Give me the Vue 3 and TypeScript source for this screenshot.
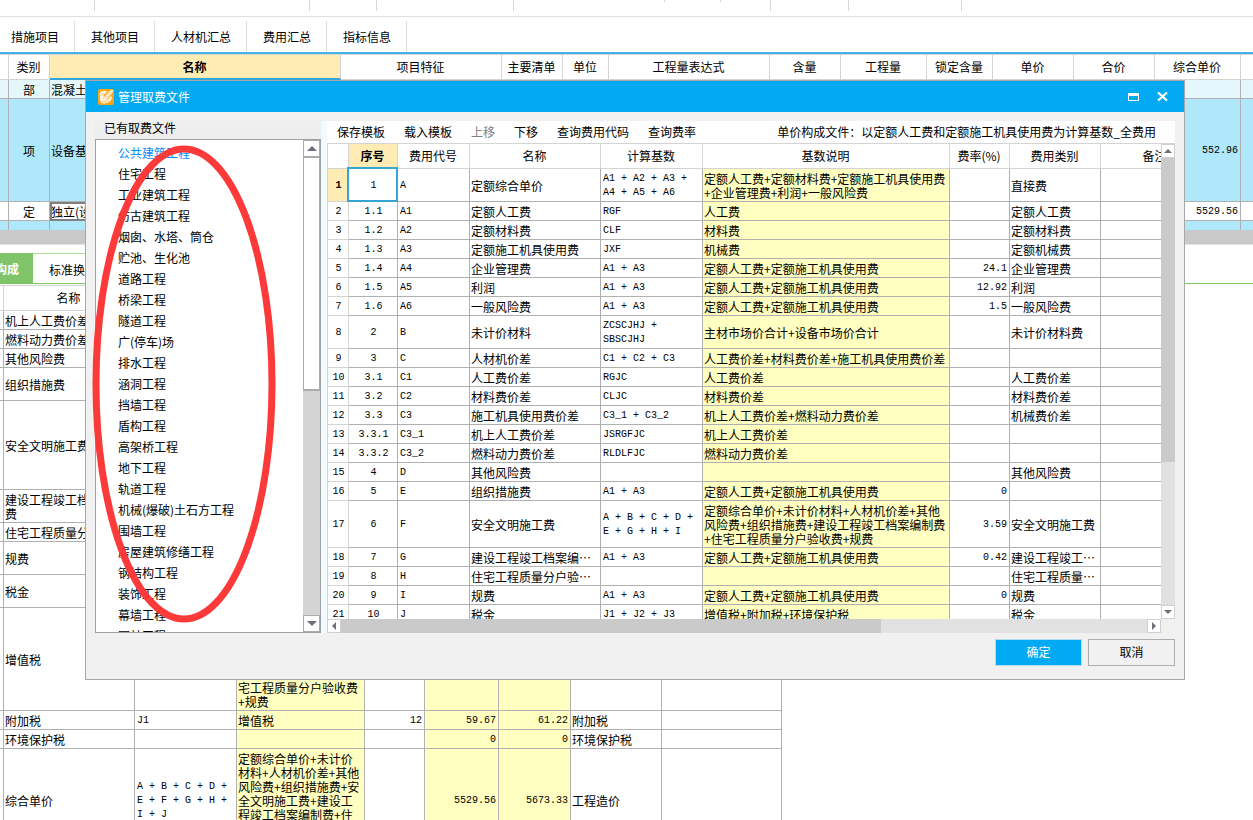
<script setup lang="ts">
import { ref } from 'vue'

interface FeeRow {
  no: string
  code: string
  name: string
  base: string
  desc: string
  rate: string
  kind: string
  lines: number
}

interface CostRow {
  name: string
  base: string
  desc: string
  rate: string
  price: string
  total: string
  kind: string
  lines: number
}

const navTabs = ['措施项目', '其他项目', '人材机汇总', '费用汇总', '指标信息']

const mainColumns = ['', '类别', '名称', '项目特征', '主要清单', '单位', '工程量表达式', '含量', '工程量', '锁定含量', '单价', '合价', '综合单价', '']

const templates = [
  '公共建筑工程', '住宅工程', '工业建筑工程', '仿古建筑工程', '烟囱、水塔、筒仓', '贮池、生化池',
  '道路工程', '桥梁工程', '隧道工程', '广(停车)场', '排水工程', '涵洞工程', '挡墙工程', '盾构工程',
  '高架桥工程', '地下工程', '轨道工程', '机械(爆破)土石方工程', '围墙工程', '房屋建筑修缮工程',
  '钢结构工程', '装饰工程', '幕墙工程', '园林工程',
]
const selected = ref(0)

const tools = [
  { label: '保存模板', disabled: false },
  { label: '载入模板', disabled: false },
  { label: '上移', disabled: true },
  { label: '下移', disabled: false },
  { label: '查询费用代码', disabled: false },
  { label: '查询费率', disabled: false },
]

const LABOR = '定额人工费+定额施工机具使用费'

function fee(no: string, code: string, name: string, base: string, desc: string, rate: string, kind: string, lines = 1): FeeRow {
  return { no, code, name, base, desc, rate, kind, lines }
}

const feeRows: FeeRow[] = [
  fee('1', 'A', '定额综合单价', 'A1 + A2 + A3 +\nA4 + A5 + A6', '定额人工费+定额材料费+定额施工机具使用费\n+企业管理费+利润+一般风险费', '', '直接费', 2),
  fee('1.1', 'A1', '定额人工费', 'RGF', '人工费', '', '定额人工费'),
  fee('1.2', 'A2', '定额材料费', 'CLF', '材料费', '', '定额材料费'),
  fee('1.3', 'A3', '定额施工机具使用费', 'JXF', '机械费', '', '定额机械费'),
  fee('1.4', 'A4', '企业管理费', 'A1 + A3', LABOR, '24.1', '企业管理费'),
  fee('1.5', 'A5', '利润', 'A1 + A3', LABOR, '12.92', '利润'),
  fee('1.6', 'A6', '一般风险费', 'A1 + A3', LABOR, '1.5', '一般风险费'),
  fee('2', 'B', '未计价材料', 'ZCSCJHJ +\nSBSCJHJ', '主材市场价合计+设备市场价合计', '', '未计价材料费', 2),
  fee('3', 'C', '人材机价差', 'C1 + C2 + C3', '人工费价差+材料费价差+施工机具使用费价差', '', ''),
  fee('3.1', 'C1', '人工费价差', 'RGJC', '人工费价差', '', '人工费价差'),
  fee('3.2', 'C2', '材料费价差', 'CLJC', '材料费价差', '', '材料费价差'),
  fee('3.3', 'C3', '施工机具使用费价差', 'C3_1 + C3_2', '机上人工费价差+燃料动力费价差', '', '机械费价差'),
  fee('3.3.1', 'C3_1', '机上人工费价差', 'JSRGFJC', '机上人工费价差', '', ''),
  fee('3.3.2', 'C3_2', '燃料动力费价差', 'RLDLFJC', '燃料动力费价差', '', ''),
  fee('4', 'D', '其他风险费', '', '', '', '其他风险费'),
  fee('5', 'E', '组织措施费', 'A1 + A3', LABOR, '0', ''),
  fee('6', 'F', '安全文明施工费', 'A + B + C + D +\nE + G + H + I', '定额综合单价+未计价材料+人材机价差+其他\n风险费+组织措施费+建设工程竣工档案编制费\n+住宅工程质量分户验收费+规费', '3.59', '安全文明施工费', 3),
  fee('7', 'G', '建设工程竣工档案编…', 'A1 + A3', LABOR, '0.42', '建设工程竣工…'),
  fee('8', 'H', '住宅工程质量分户验…', '', '', '', '住宅工程质量…'),
  fee('9', 'I', '规费', 'A1 + A3', LABOR, '0', '规费'),
  fee('10', 'J', '税金', 'J1 + J2 + J3', '增值税+附加税+环境保护税', '', '税金'),
]

const SUM_DESC = '定额综合单价+未计价\n材料+人材机价差+其他\n风险费+组织措施费+安\n全文明施工费+建设工\n程竣工档案编制费+住\n宅工程质量分户验收费\n+规费'

function cost(name: string, lines: number, extra: Partial<CostRow> = {}): CostRow {
  return { name, base: '', desc: '', rate: '', price: '', total: '', kind: '', lines, ...extra }
}

const costRows: CostRow[] = [
  cost('机上人工费价差', 1),
  cost('燃料动力费价差', 1),
  cost('其他风险费', 1),
  cost('组织措施费', 2),
  cost('安全文明施工费', 6),
  cost('建设工程竣工档案编制\n费', 2),
  cost('住宅工程质量分户验收费', 1),
  cost('规费', 2),
  cost('税金', 2),
  cost('增值税', 7, { desc: SUM_DESC }),
  cost('附加税', 1, { base: 'J1', desc: '增值税', rate: '12', price: '59.67', total: '61.22', kind: '附加税' }),
  cost('环境保护税', 1, { price: '0', total: '0', kind: '环境保护税' }),
  cost('综合单价', 7, { base: 'A + B + C + D +\nE + F + G + H +\nI + J', desc: SUM_DESC + '+税金', price: '5529.56', total: '5673.33', kind: '工程造价' }),
]
</script>

<template>
  <div class="app">
    <div class="ribbon">
      <i class="w95"></i><i class="w215"></i><i class="w67"></i><i class="w137"></i><i class="w151 short"></i><i class="w56 short"></i><i class="w50"></i><i class="w78"></i><i class="w113"></i>
    </div>

    <nav class="nav">
      <button v-for="t in navTabs" :key="t" type="button" class="nav-tab">{{ t }}</button>
    </nav>

    <table class="grid main-grid">
      <colgroup>
        <col class="w9" /><col class="w41" /><col class="w291" /><col class="w161" /><col class="w61" /><col class="w46" />
        <col class="w161" /><col class="w71" /><col class="w86" /><col class="w66" /><col class="w81" /><col class="w81" /><col class="w86" /><col />
      </colgroup>
      <thead>
        <tr>
          <th v-for="(c, i) in mainColumns" :key="i" :class="{ current: c === '名称' }">{{ c }}</th>
        </tr>
      </thead>
      <tbody>
        <tr class="part">
          <td></td><td class="c">部</td><td>混凝土工程</td><td v-for="n in 11" :key="n"></td>
        </tr>
        <tr class="item">
          <td></td><td class="c">项</td><td>设备基础</td><td v-for="n in 9" :key="n"></td><td class="r mono">552.96</td><td></td>
        </tr>
        <tr class="quota">
          <td></td><td class="c">定</td><td class="focus">独立(设备)基础</td><td v-for="n in 9" :key="n"></td><td class="r mono">5529.56</td><td></td>
        </tr>
        <tr class="rest">
          <td v-for="n in 14" :key="n"></td>
        </tr>
      </tbody>
    </table>
    <div class="main-scroll"></div>

    <div class="detail-tabs">
      <button type="button" class="detail-tab active">单价构成</button>
      <button type="button" class="detail-tab">标准换算</button>
    </div>

    <table class="grid cost-grid">
      <colgroup>
        <col class="w4" /><col class="w131" /><col class="w102" /><col class="w128" /><col class="w60" /><col class="w74" /><col class="w72" /><col class="w91" /><col class="w120" />
      </colgroup>
      <thead>
        <tr>
          <th></th><th>名称</th><th></th><th></th><th></th><th></th><th></th><th></th><th></th>
        </tr>
      </thead>
      <tbody>
        <tr v-for="r in costRows" :key="r.name" :class="'l' + r.lines">
          <td></td>
          <td>{{ r.name }}</td>
          <td class="mono">{{ r.base }}</td>
          <td class="y">{{ r.desc }}</td>
          <td class="r mono">{{ r.rate }}</td>
          <td class="r mono y">{{ r.price }}</td>
          <td class="r mono y">{{ r.total }}</td>
          <td>{{ r.kind }}</td>
          <td></td>
        </tr>
      </tbody>
    </table>

    <section class="dialog" role="dialog" aria-labelledby="dialog-title">
      <header class="titlebar">
        <svg class="logo" viewBox="0 0 16 16" aria-hidden="true">
          <rect width="16" height="16" rx="2" fill="#fba41a" />
          <path d="M1.500 4.500Q2.500 2 6 1.800L9.500 2.200L6.500 5.200L5.500 5.800L5.800 8L12 1.500L15 1L14.500 4L9 10.500Q11 10 12.200 7.800L14 7.500Q14 11 11 13Q8 15 4.500 14.200Q1.800 13 2 9.500Z" fill="#fff3dc" />
          <path d="M2.500 6.500L5.500 4M5 9.500L13 2.500M7 11L13.500 4.500M4 12.500Q8 13.500 11 10.500" fill="none" stroke="#f8b64e" stroke-width=".7" />
        </svg>
        <h1 id="dialog-title">管理取费文件</h1>
        <button type="button" class="win" aria-label="最大化">
          <svg width="11" height="8" viewBox="0 0 11 8"><path d="M0 0H11V8H0ZM1 3V7H10V3Z" fill="#fff" fill-rule="evenodd" /></svg>
        </button>
        <button type="button" class="win" aria-label="关闭">
          <svg width="11" height="9" viewBox="0 0 11 9"><path d="M1 .5L10 8.500M10 .5L1 8.500" stroke="#fff" stroke-width="2.200" /></svg>
        </button>
      </header>

      <div class="body">
        <div class="files">
          <h2>已有取费文件</h2>
          <div class="list">
            <ul>
              <li v-for="(t, i) in templates" :key="t">
                <button type="button" :class="{ on: i === selected }" @click="selected = i">{{ t }}</button>
              </li>
            </ul>
            <div class="vbar big">
              <button type="button" aria-label="向上滚动"><svg width="10" height="5" viewBox="0 0 10 5"><path d="M0 5L5 0L10 5Z" fill="#6e6e7c" /></svg></button>
              <div class="track"><div class="thumb"></div></div>
              <button type="button" aria-label="向下滚动"><svg width="10" height="5" viewBox="0 0 10 5"><path d="M0 0L5 5L10 0Z" fill="#6e6e7c" /></svg></button>
            </div>
          </div>
        </div>

        <div class="fees">
          <div class="toolbar">
            <button v-for="t in tools" :key="t.label" type="button" :disabled="t.disabled">{{ t.label }}</button>
            <span class="basis">单价构成文件：以定额人工费和定额施工机具使用费为计算基数_全费用</span>
          </div>
          <div class="pane">
            <div class="view">
              <table class="grid fee-grid">
                <colgroup>
                  <col class="w22" /><col class="w49" /><col class="w72" /><col class="w131" /><col class="w102" /><col class="w247" /><col class="w60" /><col class="w91" /><col class="w109" />
                </colgroup>
                <thead>
                  <tr>
                    <th></th><th class="current">序号</th><th>费用代号</th><th>名称</th><th>计算基数</th><th>基数说明</th><th>费率(%)</th><th>费用类别</th><th>备注</th>
                  </tr>
                </thead>
                <tbody>
                  <tr v-for="(r, i) in feeRows" :key="r.no" :class="'l' + r.lines">
                    <th class="mono" :class="{ current: i === 0 }" scope="row">{{ i + 1 }}</th>
                    <td class="c mono" :class="{ cell: i === 0 }">{{ r.no }}</td>
                    <td class="mono">{{ r.code }}</td>
                    <td>{{ r.name }}</td>
                    <td class="mono">{{ r.base }}</td>
                    <td class="y">{{ r.desc }}</td>
                    <td class="r mono">{{ r.rate }}</td>
                    <td>{{ r.kind }}</td>
                    <td></td>
                  </tr>
                </tbody>
              </table>
            </div>
            <div class="vbar">
              <button type="button" aria-label="向上滚动"><svg width="8" height="4" viewBox="0 0 8 4"><path d="M0 4L4 0L8 4Z" fill="#6e6e78" /></svg></button>
              <div class="track"><div class="thumb"></div></div>
              <button type="button" aria-label="向下滚动"><svg width="8" height="4" viewBox="0 0 8 4"><path d="M0 0L4 4L8 0Z" fill="#6e6e78" /></svg></button>
            </div>
            <div class="hbar">
              <button type="button" aria-label="向左滚动"><svg width="4" height="8" viewBox="0 0 4 8"><path d="M4 0L0 4L4 8Z" fill="#6e6e78" /></svg></button>
              <div class="track"><div class="thumb"></div></div>
              <button type="button" aria-label="向右滚动"><svg width="4" height="8" viewBox="0 0 4 8"><path d="M0 0L4 4L0 8Z" fill="#6e6e78" /></svg></button>
            </div>
            <div class="corner"></div>
          </div>
        </div>
      </div>

      <footer class="actions">
        <button type="button" class="primary">确定</button>
        <button type="button">取消</button>
      </footer>

      <svg class="mark" width="184" height="478" viewBox="0 0 184 478" aria-hidden="true">
        <ellipse cx="92" cy="239" rx="88" ry="235" fill="none" stroke="#fc3a3a" stroke-width="7" />
      </svg>
    </section>
  </div>
</template>

<style>
body {
  margin: 0;
  background: #fff;
}
</style>

<style scoped>
* {
  box-sizing: border-box;
}
.app {
  position: relative;
  height: 100vh;
  overflow: hidden;
  background: #fff;
  color: #000;
  font: 12px/14px "Noto Sans CJK SC", sans-serif;
}
button {
  margin: 0;
  padding: 0;
  border: 0;
  background: none;
  color: inherit;
  font: inherit;
  white-space: nowrap;
}
svg {
  display: block;
}
h1,
h2,
ul {
  margin: 0;
  padding: 0;
  font: inherit;
  list-style: none;
}

/* ribbon and navigation */
.ribbon {
  display: flex;
  height: 17px;
  border-bottom: 1px solid #e0e0e0;
}
.ribbon i {
  height: 11px;
  border-right: 1px solid #d8d8d8;
}
.ribbon .short {
  height: 2px;
}
.nav {
  display: flex;
  height: 37px;
  margin-left: -5px;
  padding-top: 4px;
  border-bottom: 2px solid #42b4e6;
}
.nav-tab {
  padding: 0 15px 0 16px;
  border-right: 1px solid #dcdcdc;
}

/* tables */
.grid {
  table-layout: fixed;
  border-collapse: separate;
  border-spacing: 0;
  white-space: pre;
}
.grid th,
.grid td {
  padding: 2px 1px 0;
  border-right: 1px solid #b0b0b0;
  border-bottom: 1px solid #b0b0b0;
  overflow: hidden;
  text-align: left;
  vertical-align: middle;
}
.grid th {
  border-color: #d4d4d4;
  font-weight: 400;
  text-align: center;
}
.grid thead tr {
  height: 25px;
}
.grid thead th {
  padding: 0 1px 0 0;
}
.grid .mono {
  padding-left: 2px;
}
.grid .c {
  text-align: center;
}
.grid .r {
  padding-right: 2px;
  text-align: right;
}
.grid .y {
  background: #ffffc1;
}
.grid .current {
  background: #ffecb5;
  font-weight: 700;
}
.mono {
  font-family: "Liberation Mono", monospace;
  font-size: 10px;
}
.l1 { height: 19px; }
.l2 { height: 33px; }
.l3 { height: 47px; }
.l6 { height: 89px; }
.l7 { height: 103px; }

.main-grid {
  width: 100%;
  border-top: 1px solid #d4d4d4;
}
.main-grid th:last-child,
.main-grid td:last-child {
  border-right: 0;
}
.main-grid thead .current {
  border-bottom: 2px solid #35a5d8;
}
.part { height: 19px; background: #e4f7fc; }
.item { height: 103px; background: #b0e8fb; }
.quota { height: 19px; }
.rest { height: 9px; background: #b0e8fb; }
.grid .rest td {
  border-bottom: 0;
}
.grid .focus {
  outline: 2px solid #808080;
  outline-offset: -2px;
}
.main-scroll {
  height: 15px;
  border-bottom: 1px solid #e4e4e4;
  background: #c9c9c9;
}

.detail-tabs {
  display: flex;
  height: 31px;
  margin: 8px 0 1px -43px;
  border-bottom: 1px solid #7cc462;
}
.detail-tab {
  width: 80px;
  padding-top: 2px;
  border-top: 1px solid #a9df92;
}
.detail-tab.active {
  width: 76px;
  border-top: 0;
  background: #7fc469;
  color: #fff;
  font-weight: 700;
}
.cost-grid {
  width: 782px;
  border-top: 1px solid #d4d4d4;
}

/* dialog */
.dialog {
  position: absolute;
  inset: 80px 68px 140px 85px;
  display: flex;
  flex-direction: column;
  border: 1px solid #a7a7a7;
  background: #f1f1f1;
}
.titlebar {
  display: flex;
  align-items: center;
  gap: 4px;
  height: 31px;
  padding: 0 9px 0 12px;
  background: #02a9f3;
  color: #fff;
}
.logo {
  width: 16px;
  height: 16px;
}
.titlebar h1 {
  flex: 1;
}
.win {
  display: grid;
  place-items: center;
  width: 25px;
  height: 24px;
}
.body {
  display: flex;
  flex: 1;
  min-height: 0;
  padding: 9px 9px 0;
}
.files {
  display: flex;
  flex-direction: column;
  width: 226px;
}
.files h2 {
  height: 18px;
  padding-left: 9px;
  background: #eee;
}
.list {
  display: flex;
  flex: 1;
  min-height: 0;
  border: 1px solid #a0a0a0;
  background: #fff;
}
.list ul {
  flex: 1;
  padding: 2px 0 0 22px;
  overflow: hidden;
}
.list li {
  display: flex;
  height: 21px;
}
.list .on {
  color: #0a8cff;
}
.vbar {
  display: flex;
  flex-direction: column;
  width: 14px;
  background: #e1e1e1;
}
.vbar button,
.hbar button {
  display: grid;
  place-items: center;
  width: 14px;
  height: 14px;
  border: 1px solid #d0d0d0;
  background: #fff;
}
.track {
  flex: 1;
}
.vbar .thumb {
  height: 68%;
  background: #cacaca;
}
.vbar.big {
  width: 17px;
  background: #d4d4d4;
}
.vbar.big button {
  width: 17px;
  height: 17px;
  border-color: #ababab;
}
.vbar.big .thumb {
  height: 51%;
  border: 1px solid #ababab;
  border-bottom-width: 2px;
  background: #fff;
}

.fees {
  display: flex;
  flex: 1;
  flex-direction: column;
  min-width: 0;
  border-left: 6px solid #effbfd;
}
.toolbar {
  display: flex;
  align-items: center;
  gap: 19px;
  height: 23px;
  padding: 0 19px 0 10px;
  border-bottom: 1px solid #d4d4d4;
  background: #fff;
}
.toolbar button:disabled {
  color: #808080;
}
.basis {
  margin-left: auto;
  white-space: nowrap;
}
.pane {
  display: grid;
  flex: 1;
  grid-template: minmax(0, 1fr) 14px / minmax(0, 1fr) 14px;
  min-height: 0;
}
.view {
  overflow: hidden;
  background: #fff;
}
.fee-grid {
  width: 883px;
}
.fee-grid th:first-child {
  border-left: 1px solid #d4d4d4;
}
.grid .cell {
  position: relative;
  overflow: visible;
}
.cell::after {
  position: absolute;
  inset: -2px -1px -1px -2px;
  border: 2px solid #35a5d3;
  content: "";
}
.hbar {
  display: flex;
  background: #e1e1e1;
}
.hbar .thumb {
  width: 67%;
  height: 14px;
  background: #cacaca;
}
.corner {
  background: #f0f0f0;
}
.actions {
  display: flex;
  justify-content: flex-end;
  gap: 6px;
  padding: 6px 9px 13px;
}
.actions button {
  width: 87px;
  height: 27px;
  padding-bottom: 2px;
  border: 1px solid #adadad;
}
.actions .primary {
  border-color: #b5dcee;
  background: #02a9f3;
  color: #fff;
}
.mark {
  position: absolute;
  top: 64px;
  left: 6px;
  pointer-events: none;
}

/* column widths */
.w4 { width: 4px; }
.w9 { width: 9px; }
.w22 { width: 22px; }
.w41 { width: 41px; }
.w46 { width: 46px; }
.w49 { width: 49px; }
.w50 { width: 50px; }
.w56 { width: 56px; }
.w60 { width: 60px; }
.w61 { width: 61px; }
.w66 { width: 66px; }
.w67 { width: 67px; }
.w71 { width: 71px; }
.w72 { width: 72px; }
.w74 { width: 74px; }
.w78 { width: 78px; }
.w81 { width: 81px; }
.w86 { width: 86px; }
.w91 { width: 91px; }
.w95 { width: 95px; }
.w102 { width: 102px; }
.w109 { width: 109px; }
.w113 { width: 113px; }
.w120 { width: 120px; }
.w128 { width: 128px; }
.w131 { width: 131px; }
.w137 { width: 137px; }
.w151 { width: 151px; }
.w161 { width: 161px; }
.w215 { width: 215px; }
.w247 { width: 247px; }
.w291 { width: 291px; }
</style>
